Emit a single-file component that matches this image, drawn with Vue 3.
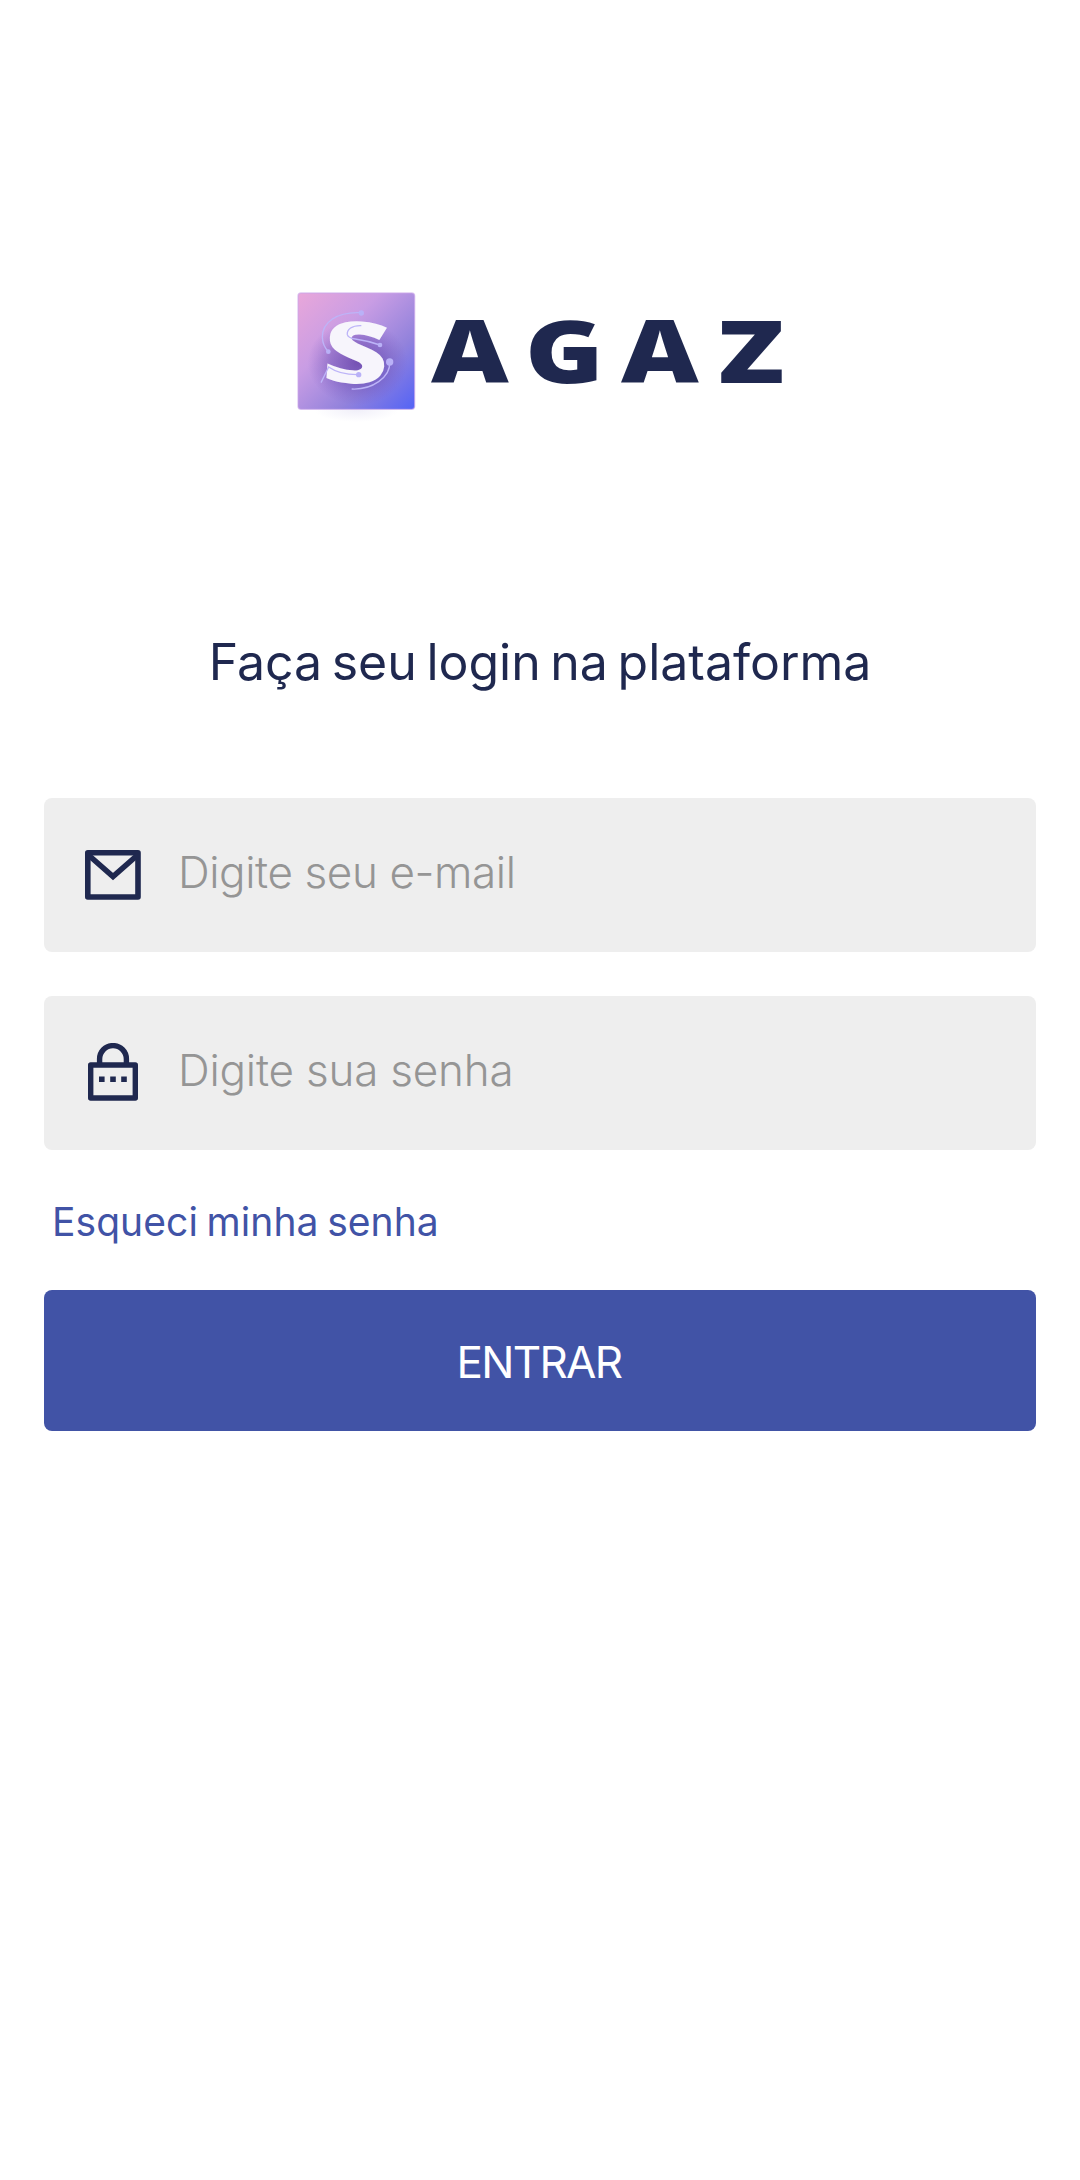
<script setup>
import { ref } from 'vue'
const email = ref('')
const password = ref('')
</script>

<template>
  <main class="page">
    <svg class="logo" viewBox="280 270 520 160" role="img" aria-label="SAGAZ">
      <defs>
        <linearGradient id="tile" x1="0" y1="0" x2="1" y2="1">
          <stop offset="0" stop-color="#e9a7da" />
          <stop offset=".35" stop-color="#c99de4" />
          <stop offset=".68" stop-color="#9282dc" />
          <stop offset="1" stop-color="#5363f6" />
        </linearGradient>
        <radialGradient id="shade">
          <stop offset="0" stop-color="#6038a0" stop-opacity=".7" />
          <stop offset=".55" stop-color="#6545ac" stop-opacity=".42" />
          <stop offset="1" stop-color="#7555bb" stop-opacity="0" />
        </radialGradient>
        <radialGradient id="glow">
          <stop offset="0" stop-color="#8a80d0" stop-opacity=".12" />
          <stop offset="1" stop-color="#8a80d0" stop-opacity="0" />
        </radialGradient>
      </defs>
      <g transform="translate(280 270) scale(.33333)">
        <ellipse cx="230" cy="422" rx="125" ry="34" fill="url(#glow)" />
        <rect x="54" y="69" width="350" height="349" rx="9" fill="url(#tile)" stroke="#c9a5ea" stroke-opacity=".6" stroke-width="4" />
        <ellipse cx="233" cy="278" rx="150" ry="128" fill="url(#shade)" />
        <text transform="translate(124 332) rotate(4) scale(1.42 1.07)" class="mark">S</text>
        <g fill="none" stroke="#bdb4f8" stroke-width="4">
          <path d="M244 128C170 124 126 158 127 202Q128 228 145 245" />
          <path d="M244 167C216 166 200 178 202 194Q204 204 226 207Q262 212 300 225" />
          <path d="M123 338L146 291Q180 315 236 314" />
          <path d="M329 276C332 322 276 360 215 357" />
        </g>
        <g fill="#b9b1f7">
          <circle cx="244" cy="129" r="8" />
          <circle cx="145" cy="245" r="7" />
          <circle cx="300" cy="225" r="7" />
          <circle cx="236" cy="314" r="8" />
          <circle cx="329" cy="276" r="11" />
        </g>
      </g>
      <g class="word">
        <text transform="translate(431 383) scale(1.232 1)">A</text>
        <text transform="translate(525 383) scale(1.222 1)">G</text>
        <text transform="translate(621 383) scale(1.232 1)">A</text>
        <text transform="translate(718 383) scale(1.25 1)">Z</text>
      </g>
    </svg>
    <h1 class="title">Faça seu login na plataforma</h1>
    <form class="form" @submit.prevent>
      <label class="field">
        <svg class="icon" viewBox="0 0 60 60" fill="none" stroke="#1f284f" stroke-width="5.6" stroke-linejoin="round">
          <rect x="4.8" y="7.8" width="50.2" height="44.2" />
          <path d="M6 10.5L30 31.5L54 10.5" stroke-linejoin="miter" />
        </svg>
        <input v-model="email" class="email" type="email" placeholder="Digite seu e-mail" />
      </label>
      <label class="field second">
        <svg class="icon" viewBox="0 0 60 60" fill="none" stroke="#1f284f" stroke-width="5.4" stroke-linejoin="round">
          <rect x="7.7" y="22" width="44.6" height="33" />
          <path d="M16.6 22V16a13.4 13.4 0 0 1 26.8 0V22" />
          <path d="M16 36.2h5.6M27.2 36.2h5.6M38.2 36.2h5.6" />
        </svg>
        <input v-model="password" class="password" type="password" placeholder="Digite sua senha" />
      </label>
      <a class="forgot">Esqueci minha senha</a>
      <button class="enter">ENTRAR</button>
    </form>
  </main>
</template>

<style>
body { background: #fff; }
</style>

<style scoped>
.page {
  box-sizing: border-box;
  width: 1080px;
  height: 2180px;
  padding: 270px 44px 0;
  display: flex;
  flex-direction: column;
  font-family: Inter, "Liberation Sans", sans-serif;
}
.logo { flex: none; width: 520px; height: 160px; margin-left: 236px; }
.mark { font: 800 240px "Open Sans", sans-serif; fill: #f7f5fc; }
.word { font: 800 87px "Open Sans", sans-serif; fill: #1f284f; }
.title {
  margin: 202px 0 0;
  height: 60px;
  line-height: 60px;
  font-size: 50px;
  font-weight: 430;
  letter-spacing: -.02px;
  word-spacing: -4.4px;
  color: #1f284f;
  text-align: center;
  white-space: nowrap;
}
.form { margin-top: 106px; display: flex; flex-direction: column; }
.field {
  box-sizing: border-box;
  height: 154px;
  padding-left: 39px;
  display: flex;
  align-items: center;
  background: #eee;
  border-radius: 8px;
}
.second { margin-top: 44px; }
.icon { flex: none; width: 60px; height: 60px; }
input {
  flex: 1;
  margin-left: 35px;
  padding: 0 0 6px;
  border: 0;
  outline: 0;
  background: transparent;
  font: 300 44px Inter, "Liberation Sans", sans-serif;
}
input::placeholder { color: #959595; opacity: 1; }
.email { letter-spacing: -.4px; }
.password { letter-spacing: -.2px; }
.forgot {
  margin: 48px 0 0 8px;
  height: 48px;
  line-height: 48px;
  font-size: 39px;
  letter-spacing: .07px;
  word-spacing: -2.4px;
  color: #4153a6;
}
.enter {
  margin-top: 44px;
  height: 141px;
  padding: 2px 2px 0 0;
  border: 0;
  border-radius: 8px;
  background: #4153a6;
  color: #fff;
  font: 400 44px Inter, "Liberation Sans", sans-serif;
  letter-spacing: -1.7px;
}
</style>
